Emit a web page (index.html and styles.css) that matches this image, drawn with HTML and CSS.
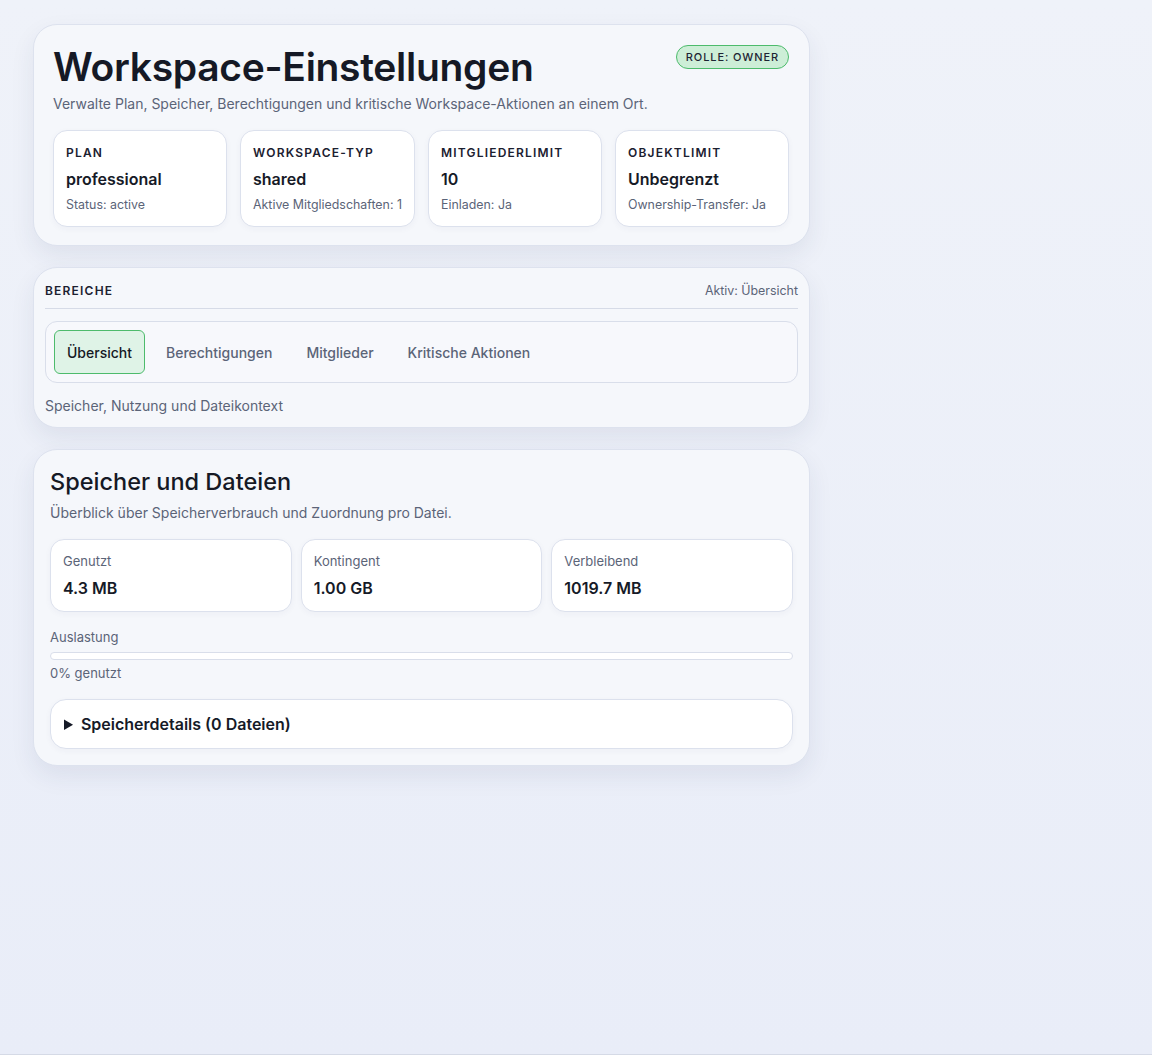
FILE: index.html
```html
<!DOCTYPE html>
<html lang="de">
<head>
<meta charset="utf-8">
<title>Workspace-Einstellungen</title>
<link rel="stylesheet" href="styles.css">
</head>
<body>
<main class="page">
  <section class="card hero">
    <div class="hero-head">
      <div>
        <h1 class="hero-title">Workspace-Einstellungen</h1>
        <p class="hero-sub">Verwalte Plan, Speicher, Berechtigungen und kritische Workspace-Aktionen an einem Ort.</p>
      </div>
      <span class="role-badge">Rolle: owner</span>
    </div>
    <div class="stat-grid">
      <div class="stat">
        <div class="stat-label">Plan</div>
        <div class="stat-value">professional</div>
        <div class="stat-meta">Status: active</div>
      </div>
      <div class="stat">
        <div class="stat-label">Workspace-Typ</div>
        <div class="stat-value">shared</div>
        <div class="stat-meta">Aktive Mitgliedschaften: 1</div>
      </div>
      <div class="stat">
        <div class="stat-label">Mitgliederlimit</div>
        <div class="stat-value">10</div>
        <div class="stat-meta">Einladen: Ja</div>
      </div>
      <div class="stat">
        <div class="stat-label">Objektlimit</div>
        <div class="stat-value">Unbegrenzt</div>
        <div class="stat-meta">Ownership-Transfer: Ja</div>
      </div>
    </div>
  </section>

  <section class="card areas">
    <div class="areas-head">
      <span class="areas-title">Bereiche</span>
      <span class="areas-active">Aktiv: Übersicht</span>
    </div>
    <nav class="tabs">
      <button class="tab is-active" type="button">Übersicht</button>
      <button class="tab" type="button">Berechtigungen</button>
      <button class="tab" type="button">Mitglieder</button>
      <button class="tab" type="button">Kritische Aktionen</button>
    </nav>
    <p class="areas-caption">Speicher, Nutzung und Dateikontext</p>
  </section>

  <section class="card storage">
    <h2 class="storage-title">Speicher und Dateien</h2>
    <p class="storage-sub">Überblick über Speicherverbrauch und Zuordnung pro Datei.</p>
    <div class="usage-grid">
      <div class="usage">
        <div class="usage-label">Genutzt</div>
        <div class="usage-value">4.3 MB</div>
      </div>
      <div class="usage">
        <div class="usage-label">Kontingent</div>
        <div class="usage-value">1.00 GB</div>
      </div>
      <div class="usage">
        <div class="usage-label">Verbleibend</div>
        <div class="usage-value">1019.7 MB</div>
      </div>
    </div>
    <div class="meter">
      <div class="meter-label">Auslastung</div>
      <div class="meter-track"><div class="meter-fill" style="width:0%"></div></div>
      <div class="meter-label">0% genutzt</div>
    </div>
    <details class="details">
      <summary>Speicherdetails (0 Dateien)</summary>
    </details>
  </section>
</main>
</body>
</html>
```

FILE: styles.css
```css
* { box-sizing: border-box; }

html, body {
  margin: 0;
  min-height: 100%;
}

body {
  font-family: Inter, "Noto Sans", sans-serif;
  color: #141826;
  background: linear-gradient(180deg, #eff2f9 0%, #e9edf8 100%);
  min-height: 1055px;
  border-bottom: 1px solid #d5dae6;
}

.page {
  width: 777px;
  margin-left: 33px;
  padding-top: 24px;
  display: flex;
  flex-direction: column;
  gap: 21px;
}

.card {
  background: #f5f7fb;
  border: 1px solid #dde2ee;
  border-radius: 24px;
  box-shadow: 0 10px 24px rgba(40, 55, 95, 0.08);
}

/* Hero */
.hero {
  padding: 19px 20px 18px 19px;
}

.hero-head {
  display: flex;
  justify-content: space-between;
  align-items: flex-start;
}

.hero-title {
  margin: 0;
  font-size: 39px;
  line-height: 46px;
  font-weight: 600;
  letter-spacing: -0.3px;
  color: #151925;
}

.hero-sub {
  margin: 4px 0 0;
  font-size: 14px;
  line-height: 20px;
  color: #5b6478;
}

.role-badge {
  margin-top: 1px;
  padding: 0 9px;
  height: 24px;
  line-height: 22px;
  border: 1px solid #4dbb6c;
  background: #cdeed7;
  border-radius: 999px;
  font-size: 11px;
  font-weight: 500;
  letter-spacing: 0.9px;
  text-transform: uppercase;
  color: #1d2433;
}

.stat-grid {
  margin-top: 16px;
  display: grid;
  grid-template-columns: repeat(4, 1fr);
  gap: 13px;
}

.stat {
  height: 97px;
  background: #ffffff;
  border: 1px solid #dce1ed;
  border-radius: 14px;
  padding: 14px 12px;
  box-shadow: 0 2px 6px rgba(40, 55, 95, 0.04);
}

.stat-label {
  font-size: 12px;
  line-height: 16px;
  font-weight: 600;
  letter-spacing: 1.2px;
  text-transform: uppercase;
  color: #1b2030;
}

.stat-value {
  margin-top: 8px;
  font-size: 16px;
  line-height: 20px;
  font-weight: 600;
  color: #161a27;
}

.stat-meta {
  margin-top: 8px;
  font-size: 12.4px;
  line-height: 16px;
  white-space: nowrap;
  color: #5b6478;
}

/* Areas */
.areas {
  padding: 13px 11px 11px 11px;
}

.areas-head {
  display: flex;
  justify-content: space-between;
  align-items: center;
  padding: 2px 0 10px;
  border-bottom: 1px solid #d6dbe7;
}

.areas-title {
  font-size: 12px;
  font-weight: 600;
  letter-spacing: 1.2px;
  text-transform: uppercase;
  color: #1b2030;
}

.areas-active {
  font-size: 12.4px;
  color: #5b6478;
}

.tabs {
  margin-top: 12px;
  display: flex;
  gap: 4px;
  padding: 8px;
  border: 1px solid #d9deea;
  border-radius: 12px;
  background: #f7f8fc;
}

.tab {
  height: 44px;
  padding: 0 12px;
  border: 1px solid transparent;
  border-radius: 6px;
  background: transparent;
  font-family: inherit;
  font-size: 14px;
  font-weight: 500;
  color: #5b6478;
  cursor: pointer;
}

.tab + .tab {
  margin-left: 4px;
}

.tab.is-active {
  background: #dff3e7;
  border-color: #4dbb6c;
  color: #151925;
}

.areas-caption {
  margin: 13px 0 0;
  font-size: 14px;
  line-height: 20px;
  color: #5b6478;
}

/* Storage */
.storage {
  padding: 16px 16px 16px;
}

.storage-title {
  margin: 0;
  font-size: 23.5px;
  line-height: 32px;
  font-weight: 500;
  color: #151925;
}

.storage-sub {
  margin: 5px 0 0;
  font-size: 14px;
  line-height: 20px;
  color: #5b6478;
}

.usage-grid {
  margin-top: 16px;
  display: grid;
  grid-template-columns: repeat(3, 1fr);
  gap: 9px;
}

.usage {
  height: 73px;
  background: #ffffff;
  border: 1px solid #dce1ed;
  border-radius: 14px;
  padding: 13px 12px;
  box-shadow: 0 2px 6px rgba(40, 55, 95, 0.04);
}

.usage-label {
  font-size: 13px;
  line-height: 16px;
  color: #5b6478;
}

.usage-value {
  margin-top: 9px;
  font-size: 16px;
  line-height: 20px;
  font-weight: 600;
  color: #161a27;
}

.meter {
  margin-top: 16px;
}

.meter-label {
  font-size: 13px;
  line-height: 18px;
  color: #5b6478;
}

.meter-track {
  margin: 6px 0 4px;
  height: 8px;
  border: 1px solid #d9deea;
  border-radius: 999px;
  background: #ffffff;
  overflow: hidden;
}

.meter-fill {
  height: 100%;
  background: #4dbb6c;
}

.details {
  margin-top: 17px;
  background: #ffffff;
  border: 1px solid #dce1ed;
  border-radius: 16px;
  box-shadow: 0 2px 6px rgba(40, 55, 95, 0.04);
}

.details summary {
  padding: 0 13px;
  height: 48px;
  line-height: 48px;
  font-size: 16px;
  font-weight: 600;
  color: #161a27;
  cursor: pointer;
}
```
